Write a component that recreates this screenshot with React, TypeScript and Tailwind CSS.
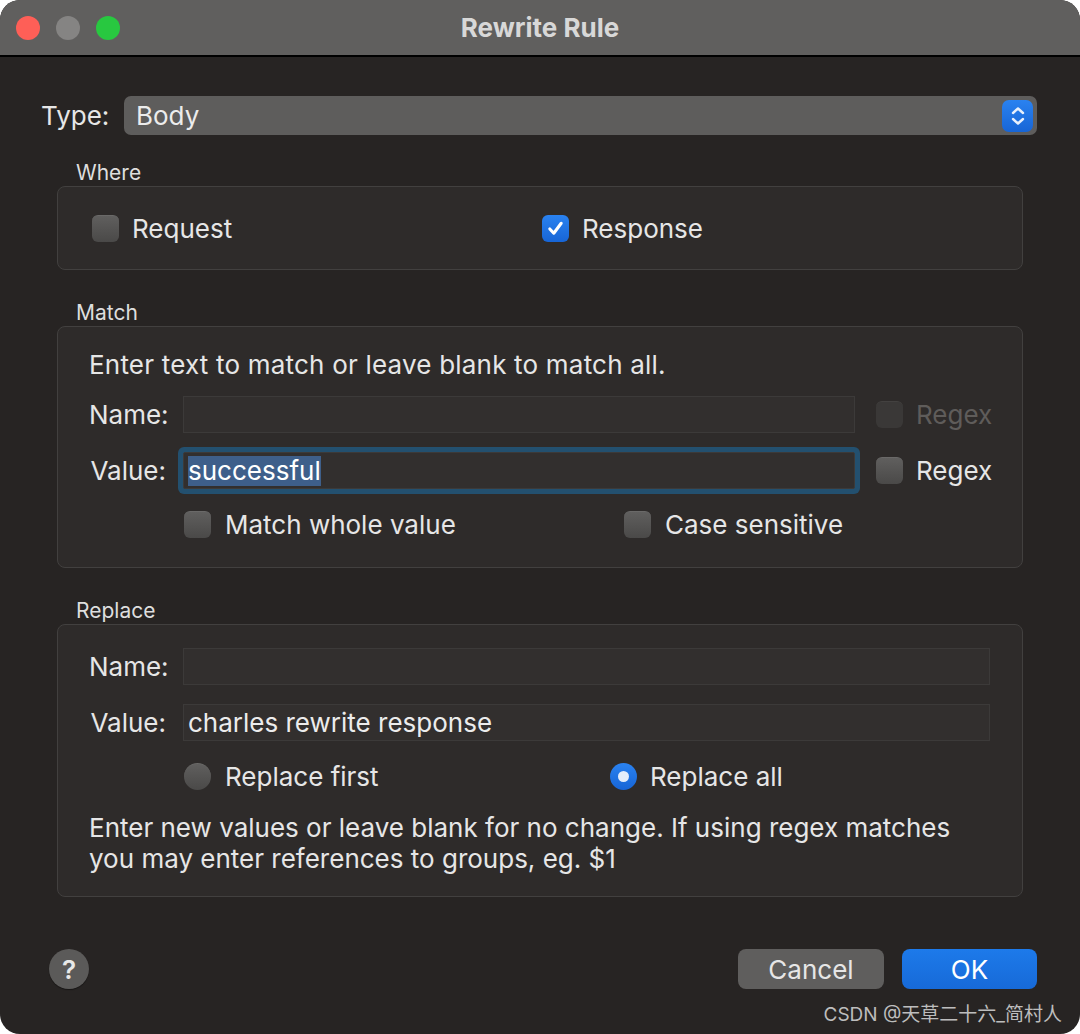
import React from "react";

const font = { fontFamily: "Inter, 'Noto Sans', 'Noto Sans CJK SC', sans-serif" };

const Checkbox: React.FC<{ checked?: boolean }> = ({ checked }) =>
  checked ? (
    <div className="w-[27px] h-[27px] rounded-[6px] bg-gradient-to-b from-[#2a82f0] to-[#1765d6] flex items-center justify-center shrink-0">
      <svg width="19" height="19" viewBox="0 0 20 20">
        <path d="M4 10.5 L8.2 15 L16 4.5" fill="none" stroke="#fff" strokeWidth="3.2" strokeLinecap="round" strokeLinejoin="round" />
      </svg>
    </div>
  ) : (
    <div className="w-[27px] h-[27px] rounded-[6px] bg-gradient-to-b from-[#605f5e] to-[#4a4948] border-t border-[#6a6968] shrink-0" />
  );

const Radio: React.FC<{ checked?: boolean }> = ({ checked }) =>
  checked ? (
    <div className="w-[27px] h-[27px] rounded-full bg-gradient-to-b from-[#2a82f0] to-[#1765d6] flex items-center justify-center shrink-0">
      <div className="w-[11px] h-[11px] rounded-full bg-[#e3edfb]" />
    </div>
  ) : (
    <div className="w-[27px] h-[27px] rounded-full bg-gradient-to-b from-[#605f5e] to-[#4a4948] border-t border-[#6a6968] shrink-0" />
  );

const Field: React.FC<{ children?: React.ReactNode; focused?: boolean; className?: string }> = ({ children, focused, className }) => (
  <div
    className={`h-[37px] bg-[#322f2e] border border-[#3c3a39] flex items-center px-[4px] text-[26px] text-[#ececec] ${
      focused ? "shadow-[0_0_0_5px_#23506f] rounded-[2px]" : ""
    } ${className ?? ""}`}
  >
    {children}
  </div>
);

const GroupLabel: React.FC<{ text: string }> = ({ text }) => (
  <div className="ml-[19px] h-[26px] flex items-center text-[21px] text-[#dedede]">{text}</div>
);

export default function App() {
  return (
    <div className="w-[1080px] h-[1034px] bg-white" style={font}>
      <div className="w-[1080px] h-[1034px] rounded-[20px] overflow-hidden bg-[#272423] flex flex-col">
        {/* title bar */}
        <div className="h-[57px] bg-[#605f5e] border-b-2 border-black flex items-center relative shrink-0">
          <div className="flex gap-[16px] pl-[16px]">
            <div className="w-[24px] h-[24px] rounded-full bg-[#fe5f57]" />
            <div className="w-[24px] h-[24px] rounded-full bg-[#858483]" />
            <div className="w-[24px] h-[24px] rounded-full bg-[#28c840]" />
          </div>
          <div className="absolute inset-0 flex items-center justify-center text-[26px] font-bold text-[#d8d8d8]">
            Rewrite Rule
          </div>
        </div>

        <div className="pl-[41px] pr-[43px] pt-[39px] flex flex-col">
          {/* Type row */}
          <div className="h-[39px] flex items-center gap-[17px]">
            <div className="w-[66px] text-[26px] leading-[39px] text-[#e6e6e6]">Type:</div>
            <div className="flex-1 h-[39px] rounded-[7px] bg-[#5e5d5c] flex items-center pl-[12px] pr-[4px] text-[26px] leading-[39px] text-[#ececec]">
              <span className="flex-1">Body</span>
              <div className="w-[31px] h-[32px] rounded-[7px] bg-gradient-to-b from-[#2a82f0] to-[#1765d6] flex items-center justify-center">
                <svg width="18" height="22" viewBox="0 0 18 22">
                  <path d="M4 8 L9 3.5 L14 8 M4 14 L9 18.5 L14 14" fill="none" stroke="#e8f0fc" strokeWidth="2.4" strokeLinecap="round" strokeLinejoin="round" />
                </svg>
              </div>
            </div>
          </div>

          {/* Where */}
          <div className="mt-[25px] ml-[16px] w-[966px]">
            <GroupLabel text="Where" />
            <div className="h-[84px] rounded-[8px] bg-[#2e2b2a] border border-[#42403f] flex items-center text-[26px] text-[#e6e6e6]">
              <div className="w-[484px] pl-[34px] flex items-center gap-[13px]">
                <Checkbox />
                <span>Request</span>
              </div>
              <div className="flex items-center gap-[13px]">
                <Checkbox checked />
                <span>Response</span>
              </div>
            </div>
          </div>

          {/* Match */}
          <div className="mt-[30px] ml-[16px] w-[966px]">
            <GroupLabel text="Match" />
            <div className="h-[242px] rounded-[8px] bg-[#2e2b2a] border border-[#42403f] pl-[31px] pt-[24px] text-[26px] text-[#e6e6e6] flex flex-col">
              <div className="h-[28px] leading-[28px] tracking-[0.2px]">Enter text to match or leave blank to match all.</div>
              <div className="mt-[17px] flex items-center h-[37px]">
                <div className="w-[77px] text-right">Name:</div>
                <Field className="ml-[17px] w-[672px]" />
                <div className="ml-[21px] flex items-center gap-[13px] text-[#5f5c5a]">
                  <div className="w-[27px] h-[27px] rounded-[6px] bg-[#3a3837] border-t border-[#434140]" />
                  <span>Regex</span>
                </div>
              </div>
              <div className="mt-[19px] flex items-center h-[37px]">
                <div className="w-[77px] text-right">Value:</div>
                <Field focused className="ml-[17px] w-[672px]">
                  <span className="bg-[#3e5f8a] text-white leading-[30px]">successful</span>
                </Field>
                <div className="ml-[21px] flex items-center gap-[13px]">
                  <Checkbox />
                  <span>Regex</span>
                </div>
              </div>
              <div className="mt-[22px] flex items-center h-[27px] pl-[95px]">
                <div className="w-[440px] flex items-center gap-[14px]">
                  <Checkbox />
                  <span>Match whole value</span>
                </div>
                <div className="flex items-center gap-[14px]">
                  <Checkbox />
                  <span>Case sensitive</span>
                </div>
              </div>
            </div>
          </div>

          {/* Replace */}
          <div className="mt-[30px] ml-[16px] w-[966px]">
            <GroupLabel text="Replace" />
            <div className="h-[273px] rounded-[8px] bg-[#2e2b2a] border border-[#42403f] pl-[31px] pr-[32px] pt-[23px] text-[26px] text-[#e6e6e6] flex flex-col">
              <div className="flex items-center h-[37px]">
                <div className="w-[77px] text-right">Name:</div>
                <Field className="ml-[17px] flex-1" />
              </div>
              <div className="mt-[19px] flex items-center h-[37px]">
                <div className="w-[77px] text-right">Value:</div>
                <Field className="ml-[17px] flex-1">charles rewrite response</Field>
              </div>
              <div className="mt-[22px] flex items-center h-[27px] pl-[95px]">
                <div className="w-[426px] flex items-center gap-[14px]">
                  <Radio />
                  <span>Replace first</span>
                </div>
                <div className="flex items-center gap-[13px]">
                  <Radio checked />
                  <span>Replace all</span>
                </div>
              </div>
              <div className="mt-[22px] leading-[31px]">
                Enter new values or leave blank for no change. If using regex matches
                <br />
                you may enter references to groups, eg. $1
              </div>
            </div>
          </div>

          {/* bottom */}
          <div className="mt-[52px] flex items-center">
            <div className="ml-[8px] w-[40px] h-[40px] rounded-full bg-[#5b5a59] flex items-center justify-center text-[26px] font-semibold text-[#e8e8e8] shadow-[0_1px_1px_rgba(0,0,0,0.4)]">
              ?
            </div>
            <div className="flex-1" />
            <button className="w-[146px] h-[40px] rounded-[8px] bg-[#5f5e5d] text-[26px] text-[#e6e6e6]">Cancel</button>
            <button className="ml-[18px] w-[135px] h-[40px] rounded-[8px] bg-gradient-to-b from-[#1d7aea] to-[#176ad8] text-[26px] text-white">OK</button>
          </div>
          <div className="mt-[12px] -mr-[25px] flex justify-end text-[19px] text-[#bdbdbd]">
            CSDN @天草二十六_简村人
          </div>
        </div>
      </div>
    </div>
  );
}
